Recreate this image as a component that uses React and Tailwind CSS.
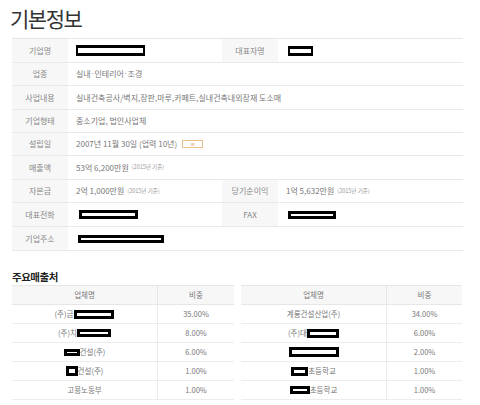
import React from "react";

const FONT = { fontFamily: '"Noto Sans CJK KR", "Noto Sans", sans-serif' };

function Box({ cls }) {
  return <span className={"inline-block border-black bg-white align-middle " + cls} />;
}

function Label({ children }) {
  return (
    <div className="flex items-center justify-center bg-[#f7f7f7] text-[8px] text-[#888]">
      {children}
    </div>
  );
}

function Val({ children, span }) {
  return (
    <div className={"flex items-center pl-[8px] text-[8px] text-[#777] " + (span ? "col-span-3" : "")}>
      {children}
    </div>
  );
}

const Small = ({ children }) => <span className="ml-[3px] text-[5.5px] text-[#999]">{children}</span>;
const Dot = () => <span className="font-['Liberation_Sans'] px-[0.5px]">·</span>;

function Row({ h, children }) {
  return (
    <div className={"grid grid-cols-[56px_154px_56px_185px] border-b border-[#e9e9e9] " + h}>
      {children}
    </div>
  );
}

function SalesTable({ rows, w, c1 }) {
  return (
    <div className={w}>
      <div className={"grid border-t border-b border-[#e6e6e6] bg-[#f7f7f7] h-[20px] text-[7.5px] text-[#777] " + c1}>
        <div className="flex items-center justify-center border-r border-[#e6e6e6]">업체명</div>
        <div className="flex items-center justify-center">비중</div>
      </div>
      {rows.map((r, i) => (
        <div key={i} className={"grid border-b border-[#ececec] h-[19px] text-[7.5px] text-[#777] " + c1}>
          <div className="flex items-center justify-center border-r border-[#ececec]">{r[0]}</div>
          <div className="flex items-center justify-center">{r[1]}</div>
        </div>
      ))}
    </div>
  );
}

export default function App() {
  const left = [
    [<><span>(주)금</span><Box cls="w-[40px] h-[9px] border-[3px] ml-[1px]" /></>, "35.00%"],
    [<><span>(주)치</span><Box cls="w-[34px] h-[8px] border-[3px]" /></>, "8.00%"],
    [<><Box cls="w-[16px] h-[7px] border-[3px]" /><span>건설(주)</span></>, "6.00%"],
    [<><Box cls="w-[12px] h-[10px] border-[3px]" /><span>건설(주)</span></>, "1.00%"],
    [<span>고용노동부</span>, "1.00%"],
  ];
  const right = [
    [<span>계룡건설산업(주)</span>, "34.00%"],
    [<><span>(주)대</span><Box cls="w-[32px] h-[9px] border-[3px]" /></>, "6.00%"],
    [<Box cls="w-[50px] h-[10px] border-[3px]" />, "2.00%"],
    [<><Box cls="w-[17px] h-[9px] border-[3px]" /><span>초등학교</span></>, "1.00%"],
    [<><Box cls="w-[20px] h-[8px] border-[3px]" /><span>초등학교</span></>, "1.00%"],
  ];
  return (
    <div className="w-[480px] h-[405px] bg-white overflow-hidden" style={FONT}>
      <div className="h-[38px] pl-[10px] pt-[3px] text-[21px] leading-[30px] tracking-[-1.5px] text-[#333]">기본정보</div>
      <div className="ml-[12px] w-[451px] border-t border-[#e6e6e6]">
        <Row h="h-[24px]">
          <Label>기업명</Label>
          <Val><Box cls="w-[69px] h-[11px] border-[3px] border-x-[2px]" /></Val>
          <Label>대표자명</Label>
          <Val><Box cls="ml-[2px] w-[25px] h-[10px] border-[3px] border-x-[2px]" /></Val>
        </Row>
        <Row h="h-[23px]">
          <Label>업종</Label>
          <Val span>실내<Dot />인테리어<Dot />조경</Val>
        </Row>
        <Row h="h-[24px]">
          <Label>사업내용</Label>
          <Val span>실내건축공사/벽지,장판,마루,카페트,실내건축내외장재 도소매</Val>
        </Row>
        <Row h="h-[23px]">
          <Label>기업형태</Label>
          <Val span>중소기업, 법인사업체</Val>
        </Row>
        <Row h="h-[23px]">
          <Label>설립일</Label>
          <Val span>
            2007년 11월 30일 (업력 10년)
            <span className="ml-[5px] inline-flex items-center justify-center w-[21px] h-[8px] border border-[#e8c08a] text-[4px] text-[#d08a3a]">IR</span>
          </Val>
        </Row>
        <Row h="h-[24px]">
          <Label>매출액</Label>
          <Val span>53억 6,200만원<Small>(2015년 기준)</Small></Val>
        </Row>
        <Row h="h-[23px]">
          <Label>자본금</Label>
          <Val>2억 1,000만원<Small>(2015년 기준)</Small></Val>
          <Label>당기순이익</Label>
          <Val>1억 5,632만원<Small>(2015년 기준)</Small></Val>
        </Row>
        <Row h="h-[24px]">
          <Label>대표전화</Label>
          <Val><Box cls="ml-[3px] w-[59px] h-[9px] border-[3px]" /></Val>
          <Label>FAX</Label>
          <Val><Box cls="ml-[2px] w-[48px] h-[8px] border-[3px]" /></Val>
        </Row>
        <Row h="h-[24px]">
          <Label>기업주소</Label>
          <Val span><Box cls="ml-[2px] w-[86px] h-[8px] border-[3px]" /></Val>
        </Row>
      </div>
      <div className="h-[34px] pl-[12px] pt-[19px] text-[10.5px] leading-[14px] font-bold tracking-[-0.5px] text-[#222]">주요매출처</div>
      <div className="flex ml-[12px] gap-[7px]">
        <SalesTable rows={left} w="w-[222px]" c1="grid-cols-[146px_76px]" />
        <SalesTable rows={right} w="w-[221px]" c1="grid-cols-[146px_75px]" />
      </div>
    </div>
  );
}
